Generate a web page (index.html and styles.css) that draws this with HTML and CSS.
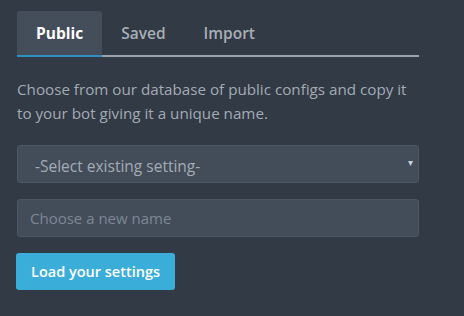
FILE: index.html
```html
<!DOCTYPE html>
<html lang="en">
<head>
    <meta charset="UTF-8">
    <title>Load settings</title>
    <link rel="stylesheet" href="styles.css">
</head>
<body>
    <div class="container">
        <ul class="tabs">
            <li class="tab active">Public</li>
            <li class="tab">Saved</li>
            <li class="tab">Import</li>
        </ul>
        <p class="info">Choose from our database of public configs and copy it to your bot giving it a unique name.</p>
        <div class="select-wrap">
            <select class="field select">
                <option>-Select existing setting-</option>
            </select>
            <span class="caret">&#9662;</span>
        </div>
        <input type="text" class="field" placeholder="Choose a new name">
        <button type="button" class="btn">Load your settings</button>
    </div>
</body>
</html>
```

FILE: styles.css
```css
body {
    background: #323a45;
    font-family: "Open Sans", "Noto Sans", sans-serif;
    margin: 0;
    padding: 11px 17px;
}
.container {
    width: 402px;
}
.tabs {
    display: flex;
    list-style: none;
    margin: 0;
    padding: 0;
    border-bottom: 2px solid #9aa3ab;
}
.tab {
    height: 44px;
    line-height: 44px;
    padding: 0 19px;
    font-size: 15.5px;
    font-weight: 600;
    color: #a7aeb6;
    border-radius: 3px 3px 0 0;
}
.tab.active {
    background: #444e5b;
    color: #fff;
    font-weight: 700;
    box-shadow: inset 0 -2px 0 #2e8fc0;
    margin-bottom: -2px;
    height: 46px;
    line-height: 44px;
}
.info {
    color: #a3abb4;
    font-size: 15.2px;
    line-height: 24px;
    margin: 20px 0 20px 0;
}
.select-wrap {
    position: relative;
}
.field {
    display: block;
    width: 100%;
    height: 38px;
    box-sizing: border-box;
    background: #434d5a;
    border: 1px solid #4b5663;
    border-radius: 3px;
    color: #a3abb4;
    font-family: inherit;
    font-size: 15px;
    padding: 0 12px;
    margin-bottom: 16px;
    outline: none;
}
.field::placeholder {
    color: #7d8793;
}
.select {
    appearance: none;
    -webkit-appearance: none;
    font-size: 15.5px;
    padding: 4px 17px 0 17px;
}
.caret {
    position: absolute;
    right: 6px;
    top: 10px;
    font-size: 10px;
    color: #c9cfd5;
}
.btn {
    background: #3aaed8;
    color: #fff;
    border: none;
    border-radius: 3px;
    font-family: inherit;
    font-size: 14.5px;
    font-weight: 600;
    height: 37px;
    padding: 0 15px;
    margin-left: -1px;
    cursor: pointer;
}
```
